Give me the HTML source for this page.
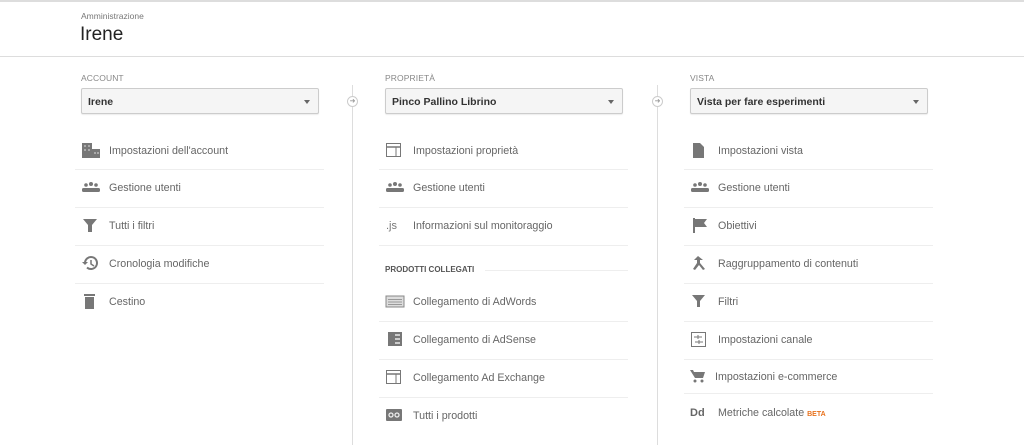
<!DOCTYPE html>
<html><head><meta charset="utf-8"><style>
*{margin:0;padding:0;box-sizing:border-box}
body{width:1024px;height:445px;background:#fff;font-family:"Liberation Sans",sans-serif;position:relative;overflow:hidden;color:#555}
.top{position:absolute;left:0;top:0;width:1024px;height:2px;background:#ddd}
.hdr{position:absolute;left:0;top:56px;width:1024px;height:1px;background:#ddd}
.t{position:absolute;white-space:nowrap}
.lab{font-size:8.5px;color:#888;letter-spacing:.1px}
.dd{position:absolute;height:26px;border:1px solid #ccc;border-radius:2px;background:#f5f5f5;box-shadow:0 1px 1px rgba(0,0,0,.08);font-size:10.5px;font-weight:bold;color:#333;padding:7px 0 0 6px}
.dd:after{content:"";position:absolute;right:8px;top:11px;border:3.5px solid transparent;border-top:4px solid #666}
.vl{position:absolute;width:1px;background:#ddd;top:85px;height:360px}
.cir{position:absolute;width:11px;height:11px;border:1px solid #ccc;border-radius:50%;background:#fff;top:96px;font-size:7px;color:#999;text-align:center;line-height:9px}
.it{position:absolute;font-size:10.7px;color:#666;white-space:nowrap;height:16px;line-height:16px;top:0}
.it svg{position:absolute;left:0;top:0}
.it span{position:absolute;left:28px;top:1px}
.sep{position:absolute;height:1px;background:#eee}
</style></head><body>
<div class="top"></div>
<div class="t" style="left:81px;top:11px;font-size:8.5px;color:#777">Amministrazione</div>
<div class="t" style="left:80px;top:24px;font-size:19px;color:#222">Irene</div>
<div class="hdr"></div>

<div class="t lab" style="left:81px;top:73px">ACCOUNT</div>
<div class="dd" style="left:81px;top:88px;width:238px">Irene</div>
<div class="t lab" style="left:385px;top:73px">PROPRIETÀ</div>
<div class="dd" style="left:385px;top:88px;width:238px">Pinco Pallino Librino</div>
<div class="t lab" style="left:690px;top:73px">VISTA</div>
<div class="dd" style="left:690px;top:88px;width:238px">Vista per fare esperimenti</div>

<div class="vl" style="left:352px"></div><div class="cir" style="left:347px">➜</div>
<div class="vl" style="left:657px"></div><div class="cir" style="left:652px">➜</div>

<!-- col1 -->
<div class="it" style="left:81px;top:142px"><svg width="20" height="16"><rect x="1" y="1" width="10" height="15" fill="#777"/><rect x="11" y="7" width="8" height="9" fill="#777"/><g fill="#aaa"><rect x="3" y="3" width="2" height="2"/><rect x="7" y="3" width="2" height="2"/><rect x="3" y="7" width="2" height="2"/><rect x="7" y="7" width="2" height="2"/><rect x="13" y="10" width="2" height="2"/><rect x="16" y="10" width="2" height="2"/></g></svg><span>Impostazioni dell'account</span></div>
<div class="sep" style="left:75px;top:169px;width:249px"></div>
<div class="it" style="left:81px;top:179px"><svg width="20" height="16"><g fill="#777"><circle cx="5" cy="6" r="1.8"/><circle cx="10" cy="5" r="2"/><circle cx="15" cy="6" r="1.8"/><rect x="1" y="9" width="18" height="4" rx="1.5"/></g></svg><span>Gestione utenti</span></div>
<div class="sep" style="left:75px;top:207px;width:249px"></div>
<div class="it" style="left:81px;top:217px"><svg width="20" height="16"><path d="M2 2h14l-5 6v7h-4v-7z" fill="#777"/></svg><span>Tutti i filtri</span></div>
<div class="sep" style="left:75px;top:245px;width:249px"></div>
<div class="it" style="left:81px;top:255px"><svg width="20" height="16"><path d="M4 8a6 6 0 1 1 2 4.5" stroke="#777" stroke-width="2" fill="none"/><path d="M1 7h6l-3 3z" fill="#777"/><path d="M10 5v4l3 2" stroke="#777" stroke-width="1.5" fill="none"/></svg><span>Cronologia modifiche</span></div>
<div class="sep" style="left:75px;top:283px;width:249px"></div>
<div class="it" style="left:81px;top:293px"><svg width="20" height="16"><rect x="3" y="1" width="11" height="2" fill="#777"/><rect x="4" y="4" width="9" height="12" fill="#777"/></svg><span>Cestino</span></div>

<!-- col2 -->
<div class="it" style="left:385px;top:142px"><svg width="20" height="16"><rect x="1.5" y="1.5" width="14" height="13" stroke="#777" fill="none"/><line x1="1.5" y1="5" x2="15.5" y2="5" stroke="#777" stroke-width="1.5"/><line x1="11" y1="5" x2="11" y2="14.5" stroke="#777"/></svg><span>Impostazioni proprietà</span></div>
<div class="sep" style="left:379px;top:169px;width:249px"></div>
<div class="it" style="left:385px;top:179px"><svg width="20" height="16"><g fill="#777"><circle cx="5" cy="6" r="1.8"/><circle cx="10" cy="5" r="2"/><circle cx="15" cy="6" r="1.8"/><rect x="1" y="9" width="18" height="4" rx="1.5"/></g></svg><span>Gestione utenti</span></div>
<div class="sep" style="left:379px;top:207px;width:249px"></div>
<div class="it" style="left:385px;top:217px"><span style="left:1px;color:#777;font-size:11px">.js</span><span>Informazioni sul monitoraggio</span></div>
<div class="sep" style="left:379px;top:245px;width:249px"></div>
<div class="t" style="left:385px;top:265px;font-size:8px;font-weight:bold;color:#555">PRODOTTI COLLEGATI</div>
<div class="sep" style="left:485px;top:270px;width:143px"></div>
<div class="it" style="left:385px;top:293px"><svg width="20" height="16"><rect x="1" y="3" width="18" height="11" fill="#ddd" stroke="#888"/><g stroke="#999"><line x1="3" y1="6.5" x2="17" y2="6.5"/><line x1="3" y1="9" x2="17" y2="9"/><line x1="3" y1="11.5" x2="17" y2="11.5"/></g></svg><span>Collegamento di AdWords</span></div>
<div class="sep" style="left:379px;top:321px;width:249px"></div>
<div class="it" style="left:385px;top:331px"><svg width="20" height="16"><rect x="3" y="1" width="14" height="14" fill="#777"/><g fill="#ccc"><rect x="10" y="3" width="5" height="2"/><rect x="10" y="7" width="5" height="2"/><rect x="10" y="11" width="5" height="2"/></g></svg><span>Collegamento di AdSense</span></div>
<div class="sep" style="left:379px;top:359px;width:249px"></div>
<div class="it" style="left:385px;top:369px"><svg width="20" height="16"><rect x="1.5" y="1.5" width="14" height="13" stroke="#777" fill="none"/><line x1="1.5" y1="5" x2="15.5" y2="5" stroke="#777" stroke-width="1.5"/><line x1="11" y1="5" x2="11" y2="14.5" stroke="#777"/></svg><span>Collegamento Ad Exchange</span></div>
<div class="sep" style="left:379px;top:397px;width:249px"></div>
<div class="it" style="left:385px;top:407px"><svg width="20" height="16"><rect x="1" y="2" width="16" height="12" rx="1" fill="#777"/><g stroke="#eee" stroke-width="1.3" fill="none"><circle cx="6" cy="8" r="2"/><circle cx="12" cy="8" r="2"/></g></svg><span>Tutti i prodotti</span></div>

<!-- col3 -->
<div class="it" style="left:690px;top:142px"><svg width="20" height="16"><path d="M3 1h7l4 4v11H3z" fill="#777"/></svg><span>Impostazioni vista</span></div>
<div class="sep" style="left:684px;top:169px;width:249px"></div>
<div class="it" style="left:690px;top:179px"><svg width="20" height="16"><g fill="#777"><circle cx="5" cy="6" r="1.8"/><circle cx="10" cy="5" r="2"/><circle cx="15" cy="6" r="1.8"/><rect x="1" y="9" width="18" height="4" rx="1.5"/></g></svg><span>Gestione utenti</span></div>
<div class="sep" style="left:684px;top:207px;width:249px"></div>
<div class="it" style="left:690px;top:217px"><svg width="20" height="16"><path d="M3 1h2v15H3zM5 2h12l-3 4 3 4H5z" fill="#777"/></svg><span>Obiettivi</span></div>
<div class="sep" style="left:684px;top:245px;width:249px"></div>
<div class="it" style="left:690px;top:255px"><svg width="20" height="16"><path d="M8 1l-4 4h3v3L3 14l2 1 4-5 4 5 2-1-5-6V5h3z" fill="#777"/></svg><span>Raggruppamento di contenuti</span></div>
<div class="sep" style="left:684px;top:283px;width:249px"></div>
<div class="it" style="left:690px;top:293px"><svg width="20" height="16"><path d="M2 2h13l-5 6v6H7V8z" fill="#777"/></svg><span>Filtri</span></div>
<div class="sep" style="left:684px;top:321px;width:249px"></div>
<div class="it" style="left:690px;top:331px"><svg width="20" height="16"><rect x="1.5" y="1.5" width="14" height="14" fill="none" stroke="#777"/><g stroke="#777"><line x1="4" y1="6" x2="12" y2="6"/><line x1="5" y1="11" x2="13" y2="11"/><line x1="8" y1="4" x2="8" y2="8"/><line x1="9" y1="9" x2="9" y2="13"/></g></svg><span>Impostazioni canale</span></div>
<div class="sep" style="left:684px;top:359px;width:249px"></div>
<div class="it" style="left:690px;top:368px"><svg width="20" height="16"><path d="M0 2h3l1 2h11l-2 6H5z" fill="#777"/><circle cx="5" cy="13" r="1.5" fill="#777"/><circle cx="12" cy="13" r="1.5" fill="#777"/></svg><span style="left:25px">Impostazioni e-commerce</span></div>
<div class="sep" style="left:684px;top:393px;width:249px"></div>
<div class="it" style="left:690px;top:404px"><span style="left:0;color:#666;font-weight:bold;font-size:11px">Dd</span><span>Metriche calcolate <b style="color:#e8711c;font-size:7px">BETA</b></span></div>
</body></html>
